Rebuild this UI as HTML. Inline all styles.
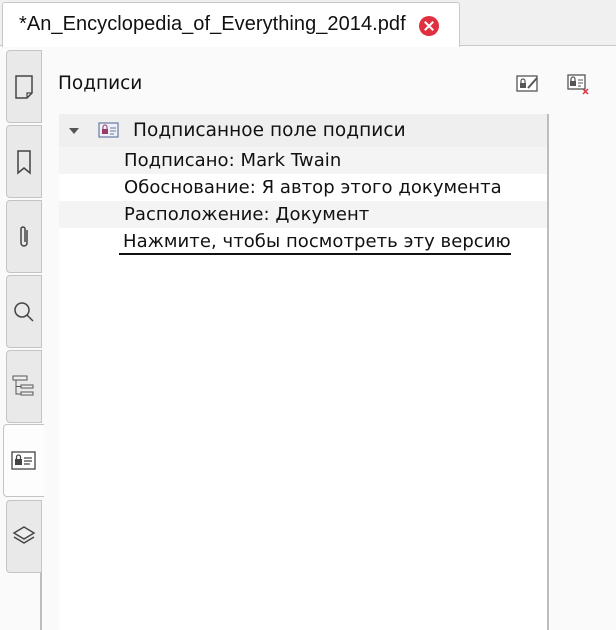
<!DOCTYPE html>
<html><head><meta charset="utf-8"><style>
*{margin:0;padding:0;box-sizing:border-box}
body{width:616px;height:630px;overflow:hidden;background:#fafafa;font-family:"DejaVu Sans","Liberation Sans",sans-serif;color:#111;position:relative}
.top{position:absolute;left:0;top:0;width:616px;height:46px;background:#f0f0f0;border-bottom:1px solid #c8c8c8}
.dtab{position:absolute;left:2px;top:2px;width:458px;height:45px;background:#fff;border:1px solid #c8c8c8;border-bottom:none;border-radius:3px 3px 0 0}
.dtab span{position:absolute;left:16px;top:10px;font-size:20px;font-family:"Liberation Sans",sans-serif;letter-spacing:0.05px}
.x{position:absolute;left:416px;top:13px;width:20px;height:20px;border-radius:50%;background:#e0303f}
.x:before,.x:after{content:"";position:absolute;left:9px;top:4px;width:2px;height:12px;background:#fff;transform:rotate(45deg)}
.x:after{transform:rotate(-45deg)}
.st{position:absolute;left:6px;width:36px;height:73px;background:#e9e9e9;border:1px solid #c4c4c4;border-radius:4px 0 0 4px;display:flex;align-items:center;justify-content:center}
.st.act{left:3px;width:41px;background:#fdfdfd;border-right:none}
.vline{position:absolute;left:40px;top:573px;width:2px;height:57px;background:#bdbdbd}
.title{position:absolute;left:58px;top:73px;font-size:18.5px}
.tree{position:absolute;left:59px;top:114px;width:490px;height:516px;background:#fff;border-right:2px solid #bdbdbd}
.row{position:absolute;left:0;width:488px;height:27px;font-size:18px;padding-left:65px;line-height:27px;letter-spacing:0.05px}
</style></head><body>
<div class="top"></div>
<div class="dtab"><span>*An_Encyclopedia_of_Everything_2014.pdf</span><div class="x"></div></div>

<div class="st" style="top:50px"><svg width="22" height="26" viewBox="0 0 22 26"><path d="M3 2h16v17l-5 5H3z" fill="none" stroke="#444" stroke-width="1.5"/><path d="M14 24v-5h5" fill="none" stroke="#444" stroke-width="1.2"/></svg></div>
<div class="st" style="top:125px"><svg width="16" height="26" viewBox="0 0 16 26"><path d="M2 2h12v22l-6-5-6 5z" fill="none" stroke="#444" stroke-width="1.5"/></svg></div>
<div class="st" style="top:200px"><svg width="14" height="26" viewBox="0 0 14 26"><path d="M10 6v13a3 3 0 0 1-6 0V5a2 2 0 0 1 4 0v13" fill="none" stroke="#444" stroke-width="1.5"/></svg></div>
<div class="st" style="top:275px"><svg width="24" height="24" viewBox="0 0 24 24"><circle cx="10" cy="10" r="7" fill="none" stroke="#444" stroke-width="1.5"/><path d="M15 15l6 6" stroke="#444" stroke-width="1.5"/></svg></div>
<div class="st" style="top:350px"><svg width="24" height="24" viewBox="0 0 24 24"><rect x="1" y="1" width="14" height="4" fill="#eee" stroke="#555"/><rect x="9" y="10" width="12" height="3" fill="#eee" stroke="#555"/><rect x="9" y="17" width="12" height="3" fill="#eee" stroke="#555"/><path d="M4 5v14h5M4 11.5h5" fill="none" stroke="#555"/></svg></div>
<div class="st act" style="top:424px"><svg width="26" height="20" viewBox="0 0 26 20"><rect x="1" y="1" width="23" height="17" fill="#fff" stroke="#444" stroke-width="1.3"/><rect x="4" y="8" width="7" height="6" fill="#444"/><path d="M5.5 8V6a2 2 0 0 1 4 0v2" fill="none" stroke="#444" stroke-width="1.3"/><path d="M13 7h8M13 10h8M13 13h6" stroke="#444" stroke-width="1.3"/></svg></div>
<div class="st" style="top:500px"><svg width="26" height="24" viewBox="0 0 26 24"><path d="M13 2l10 6-10 6-10-6z" fill="#eee" stroke="#444" stroke-width="1.4"/><path d="M3 12l10 6 10-6" fill="none" stroke="#444" stroke-width="1.4"/></svg></div>
<div class="vline"></div>

<div class="title">Подписи</div>
<svg style="position:absolute;left:516px;top:74px" width="26" height="20" viewBox="0 0 26 20"><rect x="1" y="2" width="20" height="15" fill="#fff" stroke="#555" stroke-width="1.3"/><rect x="4" y="9" width="6" height="5" fill="#555"/><path d="M5 9V7a2 2 0 0 1 4 0v2" fill="none" stroke="#555" stroke-width="1.2"/><path d="M12 14l9-10" stroke="#555" stroke-width="2"/></svg>
<svg style="position:absolute;left:567px;top:74px" width="24" height="22" viewBox="0 0 24 22"><rect x="1" y="1" width="17" height="14" fill="#fff" stroke="#555" stroke-width="1.3"/><rect x="3" y="7" width="6" height="5" fill="#555"/><path d="M4 7V5a2 2 0 0 1 4 0v2" fill="none" stroke="#555" stroke-width="1.2"/><path d="M11 6h5M11 9h5M11 12h3" stroke="#555"/><path d="M16 15l5 5M21 15l-5 5" stroke="#e0303f" stroke-width="1.5"/></svg>

<div class="tree">
 <div class="row" style="top:0;height:33px;background:#efefef;line-height:33px;padding-left:74px;font-size:18.5px">Подписанное поле подписи</div>
 <svg style="position:absolute;left:9px;top:13px" width="12" height="8"><path d="M1 1h10L6 7z" fill="#555"/></svg>
 <svg style="position:absolute;left:39px;top:8px" width="22" height="17" viewBox="0 0 22 17"><rect x="1" y="1" width="19" height="14" fill="#eef0f8" stroke="#6a7aa0" stroke-width="1.2"/><rect x="4" y="7" width="6" height="5" fill="#9a3a6a"/><path d="M5 7V5a2 2 0 0 1 4 0v2" fill="none" stroke="#9a3a6a"/><path d="M12 6h6M12 9h6M12 12h4" stroke="#6a7aa0"/></svg>
 <div class="row" style="top:33px;background:#f4f4f4">Подписано: Mark Twain</div>
 <div class="row" style="top:60px">Обоснование: Я автор этого документа</div>
 <div class="row" style="top:87px;background:#f4f4f4">Расположение: Документ</div>
 <div class="row" style="top:114px"><span style="border-bottom:2px solid #111;padding-left:4px;margin-left:-5px;line-height:22px;display:inline-block">Нажмите, чтобы посмотреть эту версию</span></div>
</div>
</body></html>
